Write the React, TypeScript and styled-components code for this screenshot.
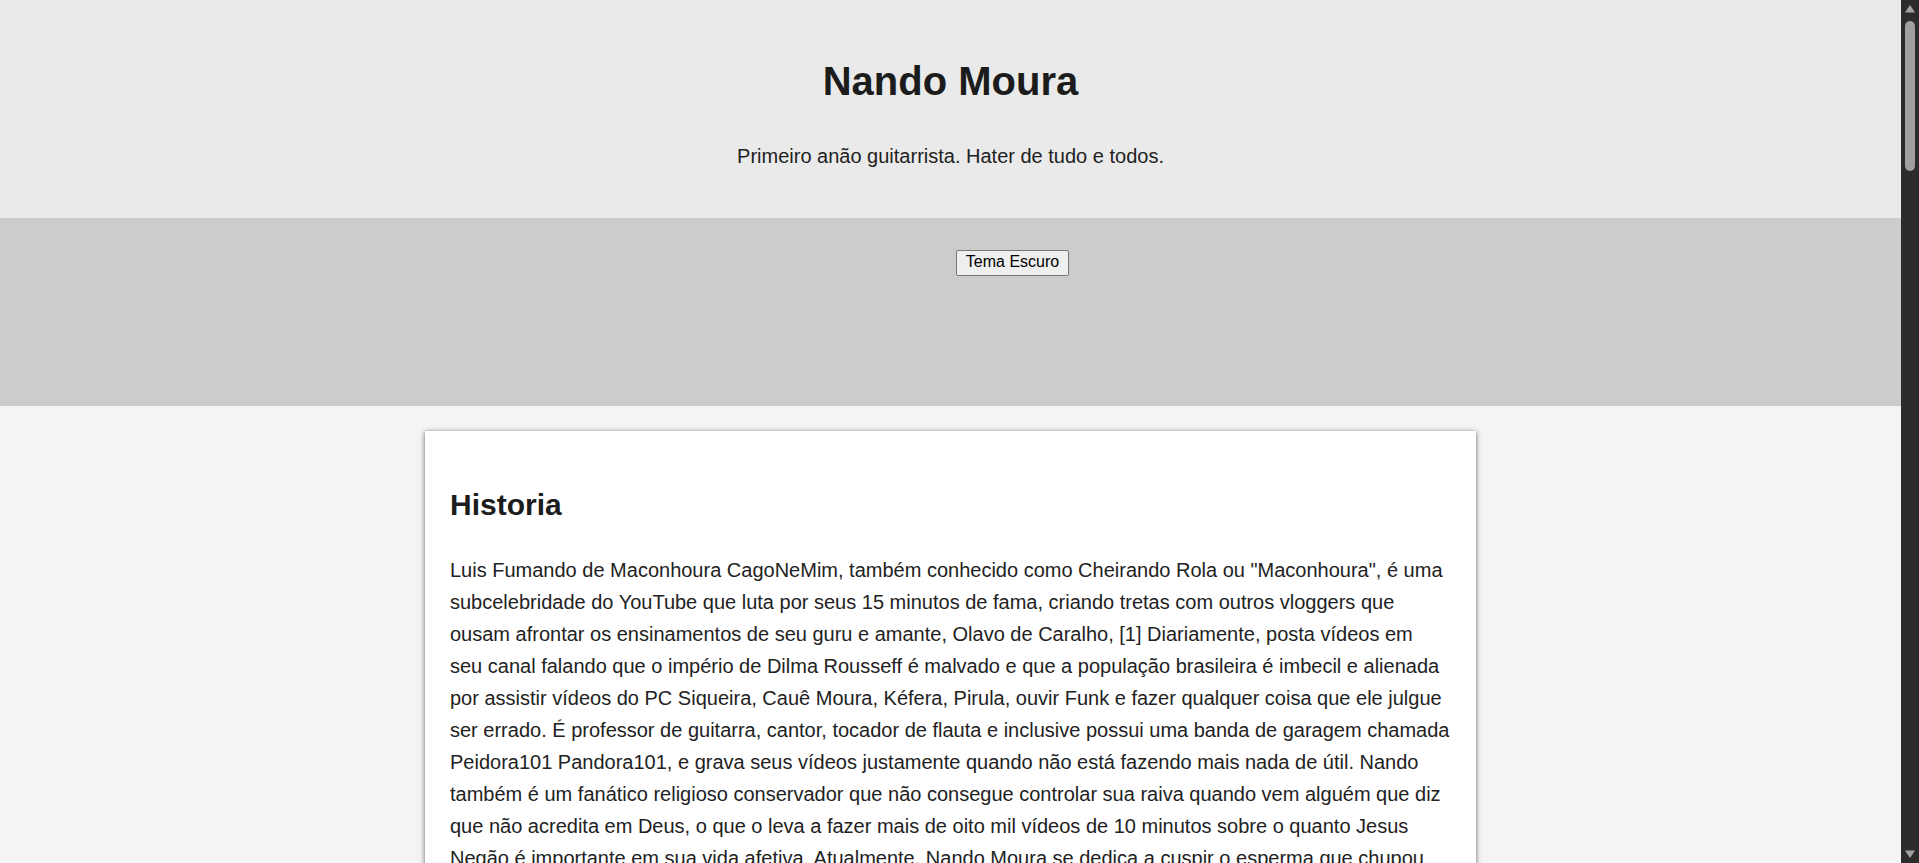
import React from "react";
import styled, { createGlobalStyle } from "styled-components";

const GlobalStyle = createGlobalStyle`
  html, body {
    margin: 0;
    padding: 0;
  }
  body {
    font-family: "Liberation Sans", Arial, Helvetica, sans-serif;
    background: #f4f4f4;
    color: #222222;
  }
`;

const Page = styled.div`
  display: flex;
  flex-direction: column;
  margin-right: 18px;
`;

const Header = styled.header`
  background: #eaeaea;
  padding: 58px 20px 50px;
  text-align: center;
`;

const Title = styled.h1`
  margin: 0;
  font-size: 40px;
  line-height: 46px;
  font-weight: 700;
  color: #1c1c1c;
`;

const Tagline = styled.p`
  margin: 41px 0 0;
  font-size: 20px;
  line-height: 23px;
  color: #222222;
`;

const ThemeBar = styled.nav`
  background: #cccccc;
  height: 188px;
  box-sizing: border-box;
  padding-top: 32px;
  display: flex;
  justify-content: center;
  align-items: flex-start;
`;

const ThemeButton = styled.button`
  margin-left: 124px;
  height: 26px;
  box-sizing: border-box;
  padding: 2px 9px 4px;
  font-family: "Liberation Sans", Arial, sans-serif;
  font-size: 16px;
  line-height: 18px;
  color: #000000;
  background: #efefef;
  border: 1px solid #767676;
  border-radius: 2px;
  cursor: pointer;
`;

const Main = styled.main`
  background: #f4f4f4;
  padding: 25px 0;
`;

const Card = styled.article`
  width: 1051px;
  margin: 0 auto;
  box-sizing: border-box;
  padding: 25px 26px 25px 25px;
  background: #ffffff;
  box-shadow: 0 1px 5px rgba(0, 0, 0, 0.6);
  font-size: 20px;
  line-height: 1.6;
  color: #222222;
`;

const SectionTitle = styled.h2`
  margin: 25px 0;
  font-size: 30px;
  line-height: 48px;
  font-weight: 700;
  color: #1c1c1c;
`;

const Paragraph = styled.p`
  margin: 20px 0;
`;

/* Drawing of the browser's dark scrollbar, lying over the right edge of the page */
const ScrollTrack = styled.div`
  position: fixed;
  top: 0;
  right: 0;
  width: 18px;
  height: 100vh;
  background: #2c2c2c;
  display: flex;
  flex-direction: column;
  align-items: center;
`;

const ScrollArrow = styled.svg`
  display: block;
  width: 18px;
  height: 17px;
  flex: none;
`;

const ScrollThumb = styled.div`
  width: 10px;
  height: 150px;
  margin-top: 4px;
  border-radius: 5px;
  background: #9f9f9f;
  flex: none;
`;

const ScrollSpacer = styled.div`
  flex: 1;
`;

function FakeScrollbar() {
  return (
    <ScrollTrack aria-hidden="true">
      <ScrollArrow viewBox="0 0 18 17">
        <polygon points="9,5 14,12.5 4,12.5" fill="#a3a3a3" />
      </ScrollArrow>
      <ScrollThumb />
      <ScrollSpacer />
      <ScrollArrow viewBox="0 0 18 17">
        <polygon points="4,4.5 14,4.5 9,12" fill="#a3a3a3" />
      </ScrollArrow>
    </ScrollTrack>
  );
}

export default function App() {
  return (
    <>
      <GlobalStyle />
      <Page>
        <Header>
          <Title>Nando Moura</Title>
          <Tagline>Primeiro anão guitarrista. Hater de tudo e todos.</Tagline>
        </Header>
        <ThemeBar>
          <ThemeButton type="button">Tema Escuro</ThemeButton>
        </ThemeBar>
        <Main>
          <Card>
            <SectionTitle>Historia</SectionTitle>
            <Paragraph>
              Luis Fumando de Maconhoura CagoNeMim, também conhecido como Cheirando Rola ou
              "Maconhoura", é uma subcelebridade do YouTube que luta por seus 15 minutos de fama,
              criando tretas com outros vloggers que ousam afrontar os ensinamentos de seu guru e
              amante, Olavo de Caralho, [1] Diariamente, posta vídeos em seu canal falando que o
              império de Dilma Rousseff é malvado e que a população brasileira é imbecil e alienada
              por assistir vídeos do PC Siqueira, Cauê Moura, Kéfera, Pirula, ouvir Funk e fazer
              qualquer coisa que ele julgue ser errado. É professor de guitarra, cantor, tocador de
              flauta e inclusive possui uma banda de garagem chamada Peidora101 Pandora101, e grava
              seus vídeos justamente quando não está fazendo mais nada de útil. Nando também é um
              fanático religioso conservador que não consegue controlar sua raiva quando vem alguém
              que diz que não acredita em Deus, o que o leva a fazer mais de oito mil vídeos de 10
              minutos sobre o quanto Jesus Negão é importante em sua vida afetiva. Atualmente, Nando
              Moura se dedica a cuspir o esperma que chupou
            </Paragraph>
          </Card>
        </Main>
      </Page>
      <FakeScrollbar />
    </>
  );
}
